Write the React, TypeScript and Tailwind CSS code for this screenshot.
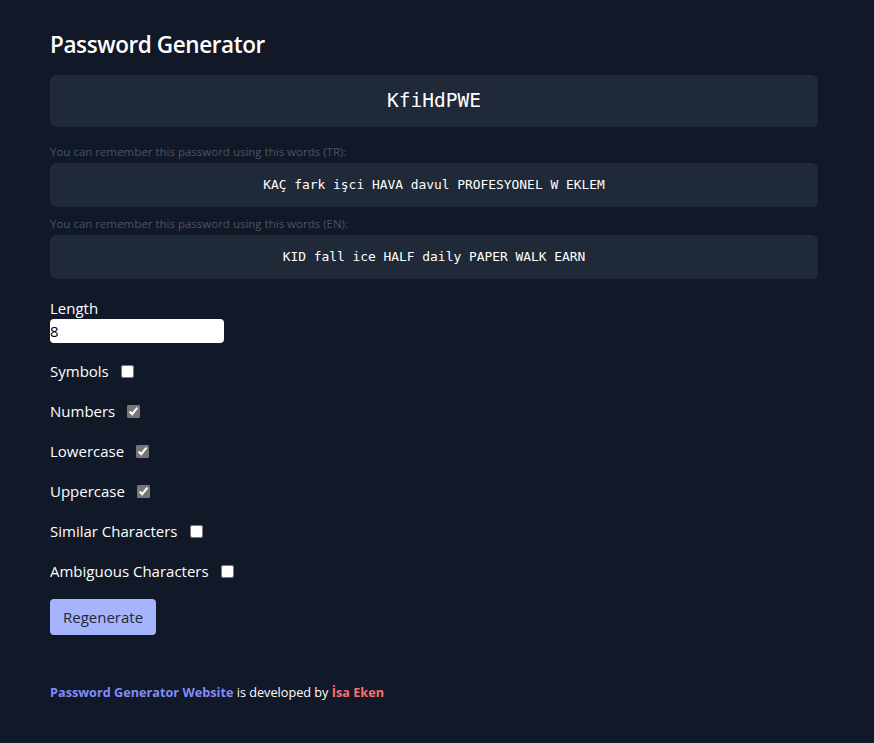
import React, { useState } from 'react';

const options = [
  { key: 'symbols', label: 'Symbols', checked: false },
  { key: 'numbers', label: 'Numbers', checked: true },
  { key: 'lowercase', label: 'Lowercase', checked: true },
  { key: 'uppercase', label: 'Uppercase', checked: true },
  { key: 'similar', label: 'Similar Characters', checked: false },
  { key: 'ambiguous', label: 'Ambiguous Characters', checked: false }
];

const App = () => {
  const [length, setLength] = useState('8');
  const [checks, setChecks] = useState<Record<string, boolean>>(
    Object.fromEntries(options.map((o) => [o.key, o.checked]))
  );

  return (
    <div
      className="min-h-[743px] bg-[#111827] text-white"
      style={{ fontFamily: '"Open Sans", "Noto Sans", sans-serif' }}
    >
      <div className="w-[768px] ml-[50px] pt-[30px]">
        {/* Title */}
        <h1 className="text-[22.5px] font-semibold leading-[30px] tracking-[-0.4px]">Password Generator</h1>

        {/* Password */}
        <div className="mt-[15px] h-[52px] rounded-md bg-[#1f2937] flex items-center justify-center font-['DejaVu_Sans_Mono',monospace] text-[19.5px]">
          KfiHdPWE
        </div>

        {/* TR words */}
        <p className="mt-[18px] text-[11.5px] leading-[14px] text-[#4b5563]">
          You can remember this password using this words (TR):
        </p>
        <div className="mt-[4px] h-[44px] rounded-md bg-[#1f2937] flex items-center justify-center font-['DejaVu_Sans_Mono',monospace] text-[12.9px]">
          KAÇ fark işci HAVA davul PROFESYONEL W EKLEM
        </div>

        {/* EN words */}
        <p className="mt-[10px] text-[11.5px] leading-[14px] text-[#4b5563]">
          You can remember this password using this words (EN):
        </p>
        <div className="mt-[4px] h-[44px] rounded-md bg-[#1f2937] flex items-center justify-center font-['DejaVu_Sans_Mono',monospace] text-[12.9px]">
          KID fall ice HALF daily PAPER WALK EARN
        </div>

        {/* Length */}
        <div className="mt-[18px]">
          <label className="block text-[15px] leading-[22px]">Length</label>
          <input
            type="number"
            value={length}
            onChange={(e) => setLength(e.target.value)}
            className="w-[174px] h-[24px] rounded-sm bg-white text-black text-[15px] px-0 outline-none [appearance:textfield] [&::-webkit-inner-spin-button]:appearance-none"
          />
        </div>

        {/* Options */}
        <div className="mt-[17px] flex flex-col gap-[18px]">
          {options.map((o) => (
            <label key={o.key} className="flex items-center h-[22px] text-[15px]">
              <span>{o.label}</span>
              <input
                type="checkbox"
                checked={checks[o.key]}
                onChange={() => setChecks({ ...checks, [o.key]: !checks[o.key] })}
                className="ml-[12px] w-[13px] h-[13px] accent-[#767676]"
              />
            </label>
          ))}
        </div>

        <button className="mt-[17px] h-[36px] px-[13px] rounded-sm bg-[#a5b4fc] text-[#1f2937] text-[15px]">
          Regenerate
        </button>

        {/* Footer */}
        <p className="mt-[48px] text-[12.7px]">
          <span className="font-bold text-[#818cf8]">Password Generator Website</span> is developed by{' '}
          <span className="font-bold text-[#f87171]">İsa Eken</span>
        </p>
      </div>
    </div>
  );
};

export default App;
